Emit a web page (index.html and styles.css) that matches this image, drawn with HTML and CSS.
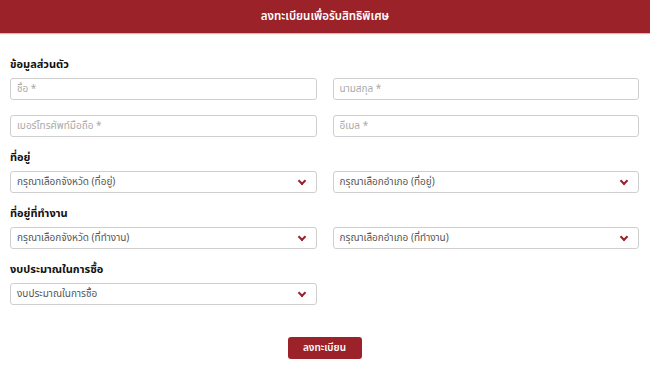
FILE: index.html
```html
<!DOCTYPE html>
<html lang="th">
<head>
  <meta charset="UTF-8" />
  <meta name="viewport" content="width=device-width, initial-scale=1.0"/>
  <title>ลงทะเบียนเพื่อรับสิทธิพิเศษ</title>
  <link rel="stylesheet" href="styles.css">
</head>
<body>
  <div class="topbar">ลงทะเบียนเพื่อรับสิทธิพิเศษ</div>
  <form id="registerForm" class="reg-form">
    <div class="section">
      <div class="section-title">ข้อมูลส่วนตัว</div>
      <div class="row">
        <input type="text" placeholder="ชื่อ *" />
        <input type="text" placeholder="นามสกุล *" />
      </div>
      <div class="row row-next">
        <input type="tel" placeholder="เบอร์โทรศัพท์มือถือ *" />
        <input type="email" placeholder="อีเมล *" />
      </div>
    </div>

    <div class="section">
      <div class="section-title">ที่อยู่</div>
      <div class="row">
        <div class="select">กรุณาเลือกจังหวัด (ที่อยู่)<span class="chev"></span></div>
        <div class="select">กรุณาเลือกอำเภอ (ที่อยู่)<span class="chev"></span></div>
      </div>
    </div>

    <div class="section">
      <div class="section-title">ที่อยู่ที่ทำงาน</div>
      <div class="row">
        <div class="select">กรุณาเลือกจังหวัด (ที่ทำงาน)<span class="chev"></span></div>
        <div class="select">กรุณาเลือกอำเภอ (ที่ทำงาน)<span class="chev"></span></div>
      </div>
    </div>

    <div class="section">
      <div class="section-title">งบประมาณในการซื้อ</div>
      <div class="row">
        <div class="select">งบประมาณในการซื้อ<span class="chev"></span></div>
      </div>
    </div>

    <div class="actions">
      <button type="submit">ลงทะเบียน</button>
    </div>
  </form>
</body>
</html>
```

FILE: styles.css
```css
body {
  font-family: "Noto Sans Thai", "Noto Sans", sans-serif;
  background: #fff;
  margin: 0;
  color: #222;
}
.topbar {
  height: 33px;
  line-height: 33px;
  background: #9b2229;
  color: #fff;
  text-align: center;
  font-size: 11.5px;
  font-weight: 600;
  box-shadow: 0 1px 1px rgba(0, 0, 0, 0.25);
}
.reg-form {
  padding: 25px 11px 0 10px;
}
.section {
  margin-bottom: 14px;
}
.section-title {
  font-size: 11px;
  font-weight: 700;
  line-height: 14px;
  margin-bottom: 6px;
  color: #111;
}
.row {
  display: grid;
  grid-template-columns: 1fr 1fr;
  gap: 16px;
}
.row-next {
  margin-top: 15px;
}
input,
.select {
  box-sizing: border-box;
  height: 22px;
  border: 1px solid #cfcfcf;
  border-radius: 3px;
  padding: 0 6px;
  font-family: inherit;
  font-size: 10px;
  background: #fff;
}
input::placeholder {
  color: #aaa;
}
.select {
  position: relative;
  line-height: 20px;
  color: #555;
}
.chev {
  position: absolute;
  right: 11px;
  top: 6px;
  width: 4px;
  height: 4px;
  border-right: 2px solid #9b2229;
  border-bottom: 2px solid #9b2229;
  transform: rotate(45deg);
}
.actions {
  text-align: center;
  margin-top: 29px;
}
button {
  background: #9b2229;
  color: #fff;
  border: none;
  border-radius: 3px;
  width: 74px;
  height: 22px;
  font-family: inherit;
  font-size: 10px;
  font-weight: 600;
  cursor: pointer;
}
```
